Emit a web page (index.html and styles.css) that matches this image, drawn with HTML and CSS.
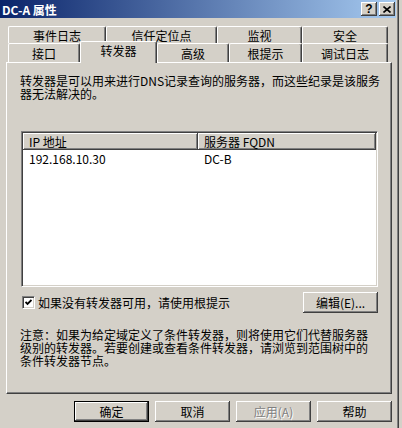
FILE: index.html
```html
<!DOCTYPE html>
<html lang="zh-CN">
<head>
  <meta charset="UTF-8">
  <title>DC-A 属性</title>
  <link rel="stylesheet" href="styles.css">
</head>
<body>
  <div class="window">
    <div class="titlebar">
      <span class="title">DC-A 属性</span>
      <span class="cap-btn help">?</span>
      <span class="cap-btn">
        <svg width="8" height="7" viewBox="0 0 8 7"><path d="M0.5 0.5 L7.5 6.5 M7.5 0.5 L0.5 6.5" stroke="#000" stroke-width="1.6" fill="none"/></svg>
      </span>
    </div>

    <div class="sheet">
      <div class="tabs">
        <div class="tab-row back">
          <div class="tab">事件日志</div>
          <div class="tab">信任定位点</div>
          <div class="tab">监视</div>
          <div class="tab">安全</div>
        </div>
        <div class="tab-row front">
          <div class="tab">接口</div>
          <div class="tab active">转发器</div>
          <div class="tab">高级</div>
          <div class="tab">根提示</div>
          <div class="tab">调试日志</div>
        </div>

        <div class="panel">
          <p class="desc">转发器是可以用来进行DNS记录查询的服务器，而这些纪录是该服务<br>器无法解决的。</p>

          <div class="listview">
            <div class="lv-head">
              <div class="lv-col">IP 地址</div>
              <div class="lv-col">服务器 FQDN</div>
            </div>
            <div class="lv-row">
              <div class="lv-cell">192.168.10.30</div>
              <div class="lv-cell">DC-B</div>
            </div>
          </div>

          <div class="option-row">
            <label class="check">
              <span class="box">
                <svg width="7" height="7" viewBox="0 0 7 7"><path d="M0.5 3 L2.5 5 L6.5 1" stroke="#000" stroke-width="1.8" fill="none"/></svg>
              </span>
              如果没有转发器可用，请使用根提示
            </label>
            <button class="btn">编辑(E)...</button>
          </div>

          <p class="note">注意：如果为给定域定义了条件转发器，则将使用它们代替服务器<br>级别的转发器。若要创建或查看条件转发器，请浏览到范围树中的<br>条件转发器节点。</p>
        </div>
      </div>

      <div class="buttons">
        <button class="btn default">确定</button>
        <button class="btn">取消</button>
        <button class="btn" disabled>应用(A)</button>
        <button class="btn">帮助</button>
      </div>
    </div>
  </div>
</body>
</html>
```
FILE: styles.css
```css
body {
  margin: 0;
  width: 402px;
  height: 428px;
  overflow: hidden;
  background: #d4d0c8;
  font: 12px/13px "Noto Sans CJK SC", "Noto Sans", sans-serif;
  color: #000;
}

.window {
  width: 396px;
  height: 428px;
  padding-right: 2px;
  border-right: 1px solid #404040;
  box-shadow: inset -1px 0 #808080;
}

/* title bar */
.titlebar {
  height: 18px;
  display: flex;
  align-items: center;
  gap: 2px;
  padding: 0 1px 0 2px;
  background: linear-gradient(to right, #0a246a, #a6caf0);
}

.title {
  flex: 1;
  color: #fff;
  font-weight: bold;
}

.cap-btn {
  width: 16px;
  height: 14px;
  display: flex;
  align-items: center;
  justify-content: center;
  background: #d4d0c8;
  box-shadow: inset -1px -1px #404040, inset 1px 1px #fff, inset -2px -2px #808080;
}

.help {
  font: bold 12px/12px "Liberation Sans", sans-serif;
}

/* property sheet */
.sheet {
  padding: 8px 4px 0 6px;
}

.tab-row {
  display: grid;
  padding-left: 2px;
}

.back {
  grid-template-columns: 98px 111px 85px 86px;
  height: 17px;
}

.front {
  grid-template-columns: 72px 77px 72px 73px 86px;
  height: 19px;
  align-items: start;
}

.tab {
  box-sizing: border-box;
  height: 17px;
  padding-top: 2px;
  text-align: center;
  background: #d4d0c8;
  border: 1px solid;
  border-color: #fff #404040 transparent #fff;
  border-bottom: 0;
  border-radius: 2px 2px 0 0;
  box-shadow: inset -1px 0 #808080;
}

.front .tab {
  height: 19px;
  padding-top: 3px;
}

.front .tab.active {
  height: 22px;
  margin-top: -2px;
  padding-top: 2px;
  position: relative;
  z-index: 1;
}

.panel {
  box-sizing: border-box;
  height: 332px;
  padding: 11px 0 0 13px;
  border: 1px solid;
  border-color: #fff #404040 #404040 #fff;
  box-shadow: inset -1px -1px #808080;
}

.desc {
  margin: 0;
}

/* list view */
.listview {
  box-sizing: border-box;
  width: 357px;
  height: 156px;
  margin: 31px 0 0 1px;
  padding: 1px;
  background: #fff;
  border: 1px solid;
  border-color: #808080 #fff #fff #808080;
  box-shadow: inset 1px 1px #404040, inset -1px -1px #d4d0c8;
}

.lv-head,
.lv-row {
  display: grid;
  grid-template-columns: 175px 178px;
}

.lv-col {
  height: 17px;
  box-sizing: border-box;
  padding: 2px 6px 0;
  background: #d4d0c8;
  box-shadow: inset -1px -1px #404040, inset 1px 1px #fff, inset -2px -2px #808080;
}

.lv-row {
  padding-top: 2px;
}

.lv-cell {
  padding-left: 6px;
}

/* checkbox + edit */
.option-row {
  width: 358px;
  margin-top: 5px;
  display: flex;
  align-items: center;
  justify-content: space-between;
}

.check {
  display: flex;
  align-items: center;
  gap: 3px;
  margin-left: 2px;
}

.box {
  box-sizing: border-box;
  width: 13px;
  height: 13px;
  display: flex;
  align-items: center;
  justify-content: center;
  background: #fff;
  border: 1px solid;
  border-color: #808080 #fff #fff #808080;
  box-shadow: inset 1px 1px #404040, inset -1px -1px #d4d0c8;
}

.btn {
  box-sizing: border-box;
  width: 75px;
  height: 21px;
  padding: 0;
  border: 0;
  font: inherit;
  color: #000;
  background: #d4d0c8;
  box-shadow: inset -1px -1px #404040, inset 1px 1px #fff, inset -2px -2px #808080;
}

.btn.default {
  border: 1px solid #000;
}

.btn:disabled {
  color: #808080;
  text-shadow: 1px 1px #fff;
}

.note {
  margin: 15px 0 0;
}

.buttons {
  display: flex;
  justify-content: flex-end;
  gap: 6px;
  margin-top: 7px;
}
```
